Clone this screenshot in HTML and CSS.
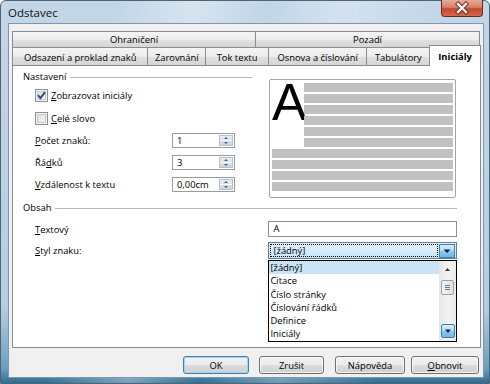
FILE: index.html
```html
<!DOCTYPE html>
<html lang="cs">
<head>
    <meta charset="UTF-8">
    <title>Odstavec</title>
    <link rel="stylesheet" href="styles.css">
</head>
<body>
    <div class="window">
        <div class="titlebar">
            <span class="title">Odstavec</span>
            <div class="close">
                <svg width="42" height="17" viewBox="0 0 42 17">
                    <path d="M17 4 L25 12 M25 4 L17 12" stroke="#6b2417" stroke-width="4.2" stroke-linecap="square"/>
                    <path d="M17 4 L25 12 M25 4 L17 12" stroke="#ffffff" stroke-width="2.4" stroke-linecap="square"/>
                </svg>
            </div>
        </div>

        <div class="client">
            <div class="tab-row back">
                <div class="tab" style="width: 243px">Ohraničení</div>
                <div class="tab last" style="width: 225px">Pozadí</div>
            </div>
            <div class="tab-row front">
                <div class="tab" style="width: 136px">Odsazení a proklad znaků</div>
                <div class="tab" style="width: 58px">Zarovnání</div>
                <div class="tab" style="width: 63px">Tok textu</div>
                <div class="tab" style="width: 99px">Osnova a číslování</div>
                <div class="tab" style="width: 63px">Tabulátory</div>
                <div class="tab active" style="width: 52px">Iniciály</div>
            </div>

            <div class="panel">
                <div class="top-section">
                    <div class="settings">
                        <div class="legend"><span>Nastavení</span></div>

                        <div class="check first">
                            <span class="box">
                                <svg width="13" height="13" viewBox="0 0 13 13">
                                    <path d="M3 6.2 L5.4 9.2 L10 3.2" fill="none" stroke="#2e4c7c" stroke-width="1.9"/>
                                </svg>
                            </span>
                            <span><u>Z</u>obrazovat iniciály</span>
                        </div>
                        <div class="check">
                            <span class="box"></span>
                            <span><u>C</u>elé slovo</span>
                        </div>

                        <div class="spin-row first">
                            <span class="label"><u>P</u>očet znaků:</span>
                            <span class="spin">
                                <span class="value">1</span>
                                <span class="spin-btn"></span>
                            </span>
                        </div>
                        <div class="spin-row">
                            <span class="label">Řá<u>d</u>ků</span>
                            <span class="spin">
                                <span class="value">3</span>
                                <span class="spin-btn"></span>
                            </span>
                        </div>
                        <div class="spin-row">
                            <span class="label"><u>V</u>zdálenost k textu</span>
                            <span class="spin">
                                <span class="value">0,00cm</span>
                                <span class="spin-btn"></span>
                            </span>
                        </div>
                    </div>

                    <div class="preview">
                        <div class="preview-top">
                            <div class="initial">A</div>
                            <div class="bars">
                                <div class="bar"></div>
                                <div class="bar"></div>
                                <div class="bar"></div>
                                <div class="bar"></div>
                                <div class="bar"></div>
                                <div class="bar"></div>
                            </div>
                        </div>
                        <div class="bar"></div>
                        <div class="bar"></div>
                        <div class="bar"></div>
                        <div class="bar"></div>
                    </div>
                </div>

                <div class="content-section">
                    <div class="legend"><span>Obsah</span></div>

                    <div class="form-row text-row">
                        <span class="label"><u>T</u>extový</span>
                        <span class="textbox">A</span>
                    </div>
                    <div class="form-row combo-row">
                        <span class="label"><u>S</u>tyl znaku:</span>
                        <div class="combo">
                            <span class="combo-text"><span class="focus">[žádný]</span></span>
                            <span class="combo-btn">
                                <svg width="16" height="14" viewBox="0 0 16 14">
                                    <path d="M4.5 5.5 L11.5 5.5 L8 9 Z" fill="#1b2633"/>
                                </svg>
                            </span>

                            <div class="dropdown">
                                <ul class="items">
                                    <li class="selected">[žádný]</li>
                                    <li>Citace</li>
                                    <li>Číslo stránky</li>
                                    <li>Číslování řádků</li>
                                    <li>Definice</li>
                                    <li>Iniciály</li>
                                </ul>
                                <div class="scrollbar">
                                    <svg class="arrow-up" width="17" height="16" viewBox="0 0 17 16">
                                        <path d="M6 10 L11 10 L8.5 7 Z" fill="#3a3a3a"/>
                                    </svg>
                                    <span class="thumb">
                                        <svg width="13" height="15" viewBox="0 0 13 15">
                                            <path d="M4 5.5 H9 M4 7.5 H9 M4 9.5 H9" stroke="#6f7a86" stroke-width="1"/>
                                        </svg>
                                    </span>
                                    <span class="down-btn">
                                        <svg width="14" height="14" viewBox="0 0 14 14">
                                            <path d="M4 5.5 L10 5.5 L7 9 Z" fill="#1b2633"/>
                                        </svg>
                                    </span>
                                </div>
                            </div>
                        </div>
                    </div>
                </div>
            </div>

            <div class="buttons">
                <button class="btn default" style="width: 66px">OK</button>
                <button class="btn" style="width: 65px; margin-left: 10px">Zrušit</button>
                <button class="btn" style="width: 70px; margin-left: 11px">Nápověda</button>
                <button class="btn" style="width: 68px; margin-left: 6px"><u>O</u>bnovit</button>
            </div>
        </div>
    </div>
</body>
</html>
```

FILE: styles.css
```css
* {
    box-sizing: border-box;
}

body {
    margin: 0;
    font-family: "Open Sans", "Noto Sans", sans-serif;
    font-size: 9.4px;
    color: #000;
}

.window {
    width: 490px;
    height: 384px;
    display: flex;
    flex-direction: column;
    padding: 0 5px 5px 7px;
    border: 1px solid #4f6474;
    border-radius: 6px 6px 0 0;
    background:
        linear-gradient(100deg, rgba(255, 255, 255, 0) 20%, rgba(255, 255, 255, 0.35) 35%, rgba(255, 255, 255, 0) 48%, rgba(255, 255, 255, 0.3) 62%, rgba(255, 255, 255, 0) 80%),
        linear-gradient(to bottom, #c2d6e8 0%, #b6cde1 80%, #6c9fbe 96%, #2f6d91 100%);
}

.titlebar {
    height: 22px;
    display: flex;
    justify-content: space-between;
    align-items: flex-start;
}

.title {
    margin-top: 4px;
    font-size: 11.5px;
    color: #111;
}

.close {
    width: 42px;
    height: 17px;
    margin-top: -1px;
    margin-right: 1px;
    border: 1px solid #6a2a1d;
    border-top: none;
    border-radius: 0 0 4px 4px;
    background: linear-gradient(to bottom, #e8aa98 0%, #d8806a 45%, #c2472c 55%, #d86a4c 100%);
}

.close svg {
    display: block;
    margin-left: -1px;
}

/* dialog body */
.client {
    flex: 1;
    background: #f0f0f0;
    border: 1px solid #7d98ae;
    padding: 7px 2px 0 3px;
}

.tab-row {
    display: flex;
}

.tab-row.back {
    height: 16px;
}

.tab-row.front {
    height: 18px;
}

.tab {
    border: 1px solid #898c95;
    border-right: none;
    border-bottom: none;
    background: linear-gradient(to bottom, #f4f4f4 0%, #ececec 50%, #e0e0e0 51%, #d6d6d6 100%);
    text-align: center;
    white-space: nowrap;
}

.back .tab {
    line-height: 16px;
}

.front .tab {
    line-height: 18px;
    padding-top: 1px;
}

.tab.last {
    border-right: 1px solid #898c95;
}

.tab.active {
    position: relative;
    z-index: 1;
    height: 21px;
    margin-top: -2px;
    border-right: 1px solid #898c95;
    background: #fff;
    font-weight: bold;
    padding-top: 2px;
}

.panel {
    height: 283px;
    margin-right: 0;
    border: 1px solid #898c95;
    background: #fff;
}

.top-section {
    display: flex;
    align-items: flex-start;
    padding-left: 10px;
}

.settings {
    width: 229px;
}

.legend {
    display: flex;
    align-items: center;
    height: 12px;
    line-height: 12px;
    margin-top: 5px;
}

.legend::after {
    content: "";
    flex: 1;
    margin-left: 4px;
    border-top: 1px solid #b3b7bb;
}

.check {
    display: flex;
    align-items: center;
    height: 13px;
    margin-top: 10px;
    margin-left: 12px;
}

.check.first {
    margin-top: 6px;
}

.box {
    width: 13px;
    height: 13px;
    margin-right: 3px;
    border: 1px solid #8e8f8f;
    background: linear-gradient(135deg, #dcdcdc, #f7f7f7);
    box-shadow: inset 0 0 0 1px #f4f4f4, inset 0 0 0 2px #c6ccd2;
}

.box svg {
    display: block;
    margin: -1px;
}

.spin-row {
    display: flex;
    align-items: center;
    height: 15px;
    margin-top: 7px;
    margin-left: 12px;
}

.spin-row.first {
    margin-top: 8px;
}

.spin-row .label {
    width: 137px;
}

.spin {
    width: 63px;
    height: 15px;
    display: flex;
    align-items: center;
    justify-content: space-between;
    border: 1px solid #9a9a9a;
    padding: 0 1px 0 4px;
}

.spin-btn {
    width: 14px;
    height: 11px;
    border: 1px solid #b4c0cc;
    background:
        linear-gradient(to bottom, transparent 45%, #ffffff 45%, #ffffff 55%, transparent 55%),
        linear-gradient(to bottom, #e9eef3, #c9d4de);
    position: relative;
}

.spin-btn::before,
.spin-btn::after {
    content: "";
    position: absolute;
    left: 4px;
    border-left: 2.5px solid transparent;
    border-right: 2.5px solid transparent;
}

.spin-btn::before {
    top: 1px;
    border-bottom: 2.5px solid #4e6180;
}

.spin-btn::after {
    bottom: 1px;
    border-top: 2.5px solid #4e6180;
}

.preview {
    width: 187px;
    height: 119px;
    margin-top: 13px;
    margin-left: 17px;
    padding: 3px 2px 0 2px;
    border: 1px solid #a5a5a5;
    border-radius: 2px;
}

.preview-top {
    display: flex;
}

.initial {
    width: 32px;
    height: 64px;
    font-family: "Liberation Sans", Arial, sans-serif;
    font-size: 52px;
    line-height: 52px;
    margin-top: -7px;
    padding-top: 0;
}

.bars {
    flex: 1;
    margin-top: 7px;
}

.bar {
    height: 9px;
    margin-bottom: 2px;
    background: #c0c0c0;
}

.bars {
    margin-top: 0;
}

.content-section {
    padding: 0 23px 0 10px;
}

.content-section .legend {
    margin-top: 4px;
}

.form-row {
    display: flex;
    align-items: center;
    margin-left: 12px;
}

.form-row .label {
    width: 234px;
}

.text-row {
    margin-top: 7px;
}

.combo-row {
    margin-top: 5px;
}

.textbox {
    width: 189px;
    height: 16px;
    line-height: 14px;
    padding-left: 4px;
    border: 1px solid #8f8f8f;
}

.combo {
    position: relative;
    width: 189px;
    height: 17px;
    display: flex;
    align-items: center;
    padding: 1px;
    border: 1px solid #5f7f9c;
    background: linear-gradient(to bottom, #e3f3fc, #c8e6f8);
}

.combo-text {
    flex: 1;
    height: 13px;
}

.focus {
    display: block;
    height: 13px;
    line-height: 11px;
    padding-left: 2px;
    margin-right: 1px;
    border: 1px dotted #000;
}

.combo-btn {
    width: 16px;
    height: 14px;
    border: 1px solid #3c7fb1;
    background: linear-gradient(to bottom, #d6eefb 0%, #b0dbf3 50%, #8ccbee 51%, #6db8e4 100%);
}

.combo-btn svg,
.down-btn svg {
    display: block;
    margin: -1px;
}

.dropdown {
    position: absolute;
    top: 17px;
    left: -1px;
    width: 189px;
    height: 82px;
    display: flex;
    border: 1px solid #000;
    background: #fff;
    z-index: 2;
}

.items {
    flex: 1;
    list-style-type: none;
    margin: 0;
    padding: 0;
}

.items li {
    height: 13.3px;
    line-height: 13.3px;
    padding-left: 1px;
    white-space: nowrap;
}

.items li.selected {
    background: #c9e4f6;
}

.scrollbar {
    width: 17px;
    display: flex;
    flex-direction: column;
    align-items: center;
    background: linear-gradient(to right, #e6e6e6, #f3f3f3 60%, #eaeaea);
}

.arrow-up {
    display: block;
    flex: none;
}

.thumb {
    width: 13px;
    height: 15px;
    margin-top: 3px;
    border: 1px solid #9aa3ad;
    border-radius: 2px;
    background: linear-gradient(to right, #f4f4f4, #e0e0e0);
}

.thumb svg {
    display: block;
    margin: -1px;
}

.down-btn {
    width: 14px;
    height: 14px;
    margin-top: auto;
    margin-bottom: 3px;
    border: 1px solid #3c7fb1;
    border-radius: 2px;
    background: linear-gradient(to bottom, #d6eefb 0%, #b0dbf3 50%, #8ccbee 51%, #6db8e4 100%);
}

/* bottom buttons */
.buttons {
    display: flex;
    justify-content: flex-end;
    margin-top: 8px;
    padding-right: 2px;
}

.btn {
    height: 18px;
    padding: 0;
    font-family: inherit;
    font-size: inherit;
    color: #000;
    border: 1px solid #707070;
    border-radius: 3px;
    background: linear-gradient(to bottom, #f2f2f2 0%, #ebebeb 50%, #dddddd 51%, #cfcfcf 100%);
    box-shadow: inset 0 0 0 1px rgba(255, 255, 255, 0.7);
}

.btn.default {
    border-color: #3c7fb1;
    box-shadow: inset 0 0 0 1px #9fd4f3;
}
```
